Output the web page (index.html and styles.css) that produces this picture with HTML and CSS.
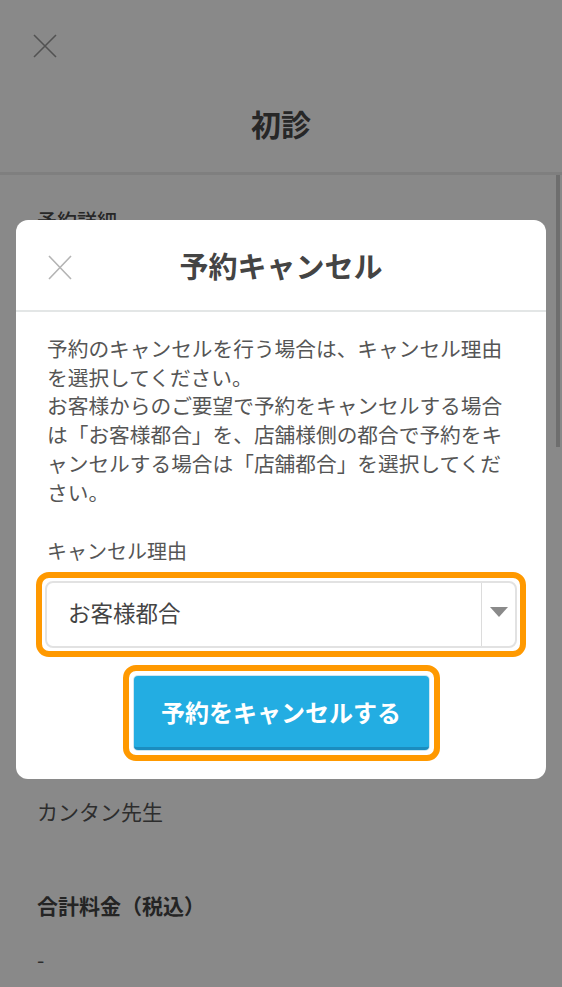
FILE: index.html
```html
<!DOCTYPE html>
<html lang="ja">
<head>
<meta charset="utf-8">
<title>初診</title>
<link rel="stylesheet" href="styles.css">
</head>
<body>
<div class="page">
  <header class="topbar">
    <button class="topbar-close" aria-label="閉じる">
      <svg width="24" height="24" viewBox="0 0 24 24"><path d="M1 1L23 23M23 1L1 23" stroke="#999" stroke-width="1.6" fill="none"/></svg>
    </button>
    <h1 class="topbar-title">初診</h1>
  </header>
  <main class="content">
    <h2 class="section-title">予約詳細</h2>
    <div class="rows"></div>
    <p class="value">カンタン先生</p>
    <h3 class="field-label">合計料金（税込）</h3>
    <p class="value value-dash">-</p>
  </main>
  <div class="scroll-thumb"></div>
</div>

<div class="overlay">
  <div class="modal">
    <div class="modal-head">
      <button class="modal-close" aria-label="閉じる">
        <svg width="24" height="25" viewBox="0 0 24 25"><path d="M1 1L23 24M23 1L1 24" stroke="#b4b4b4" stroke-width="1.6" fill="none"/></svg>
      </button>
      <h2 class="modal-title">予約キャンセル</h2>
      <span></span>
    </div>
    <div class="modal-body">
      <p class="desc">予約のキャンセルを行う場合は、キャンセル理由を選択してください。<br>お客様からのご要望で予約をキャンセルする場合は「お客様都合」を、店舗様側の都合で予約をキャンセルする場合は「店舗都合」を選択してください。</p>
      <label class="reason-label">キャンセル理由</label>
      <div class="ring ring-select">
        <div class="select">
          <span class="select-text">お客様都合</span>
          <span class="select-arrow">
            <svg width="18" height="10" viewBox="0 0 18 10"><polygon points="0,0 18,0 9,10" fill="#8a8a8a"/></svg>
          </span>
        </div>
      </div>
      <div class="btn-wrap">
        <div class="ring ring-btn">
          <button class="btn-cancel">予約をキャンセルする</button>
        </div>
      </div>
    </div>
  </div>
</div>
</body>
</html>
```

FILE: styles.css
```css
* { box-sizing: border-box; }
html, body { margin: 0; padding: 0; }
body {
  width: 562px;
  height: 987px;
  overflow: hidden;
  background: #fff;
  font-family: "Noto Sans CJK JP", "Noto Sans", sans-serif;
  color: #555;
}
button { font-family: inherit; border: 0; background: none; padding: 0; margin: 0; }
h1, h2, h3, p { margin: 0; }

.page { position: relative; height: 987px; background: #fff; }

.topbar {
  height: 175px;
  border-bottom: 3px solid #ececec;
  display: flex;
  flex-direction: column;
  padding: 34px 0 0 33px;
}
.topbar-close { width: 24px; height: 24px; display: block; }
.topbar-close svg { display: block; }
.topbar-title {
  margin: 45px 0 0 -33px;
  text-align: center;
  font-size: 30px;
  line-height: 40px;
  font-weight: 700;
  color: #4a4a4a;
}

.content { padding: 32px 37px 0; }
.section-title {
  font-size: 20px;
  line-height: 28px;
  font-weight: 500;
  color: #4a4a4a;
}
.rows { height: 561px; }
.value {
  font-size: 21px;
  line-height: 30px;
  color: #555;
}
.field-label {
  margin-top: 64px;
  font-size: 21px;
  line-height: 30px;
  font-weight: 700;
  color: #444;
}
.value-dash { margin-top: 24px; }

.scroll-thumb {
  position: absolute;
  left: 556px;
  top: 175px;
  width: 4px;
  height: 272px;
  background: #cdcdcd;
}

.overlay {
  position: fixed;
  inset: 0;
  background: rgba(0, 0, 0, 0.463);
  display: flex;
  flex-direction: column;
  align-items: center;
  padding-top: 220px;
}
.modal {
  width: 530px;
  background: #fff;
  border-radius: 12px;
  overflow: hidden;
}
.modal-head {
  height: 92px;
  border-bottom: 2px solid #e3e6e6;
  display: grid;
  grid-template-columns: 1fr auto 1fr;
  align-items: center;
}
.modal-close { justify-self: start; margin-left: 32px; margin-top: 4px; width: 24px; height: 25px; }
.modal-close svg { display: block; }
.modal-title {
  font-size: 29px;
  line-height: 40px;
  font-weight: 700;
  color: #444;
}

.modal-body { padding: 22px 31px 18px; }
.desc {
  font-size: 20.7px;
  line-height: 28.7px;
  color: #555;
  line-break: loose;
}
.reason-label {
  display: block;
  margin-top: 31px;
  font-size: 20px;
  line-height: 28.7px;
  color: #555;
}

.ring {
  border: 6px solid #ff9900;
  border-radius: 13px;
  background: #fff;
}
.ring-select { margin: 6px -11px 0; padding: 3px; }
.select {
  height: 67px;
  border: 2px solid #e2e2e2;
  border-radius: 8px;
  display: flex;
  align-items: stretch;
}
.select-text {
  flex: 1;
  display: flex;
  align-items: center;
  padding: 0 0 4px 21px;
  font-size: 22.5px;
  color: #444;
}
.select-arrow {
  width: 34px;
  border-left: 1px solid #dcdcdc;
  display: flex;
  align-items: center;
  justify-content: center;
  padding-bottom: 4px;
}
.select-arrow svg { display: block; }

.btn-wrap { margin-top: 8px; display: flex; justify-content: center; }
.ring-btn { padding: 5px; }
.btn-cancel {
  display: block;
  width: 295px;
  height: 74px;
  background: #23ade2;
  border-radius: 4px;
  border-bottom: 3px solid #1b8dbf;
  box-shadow: 0 0 0 1px #cfe7f2;
  color: #fff;
  font-size: 24px;
  font-weight: 700;
  letter-spacing: 0;
}
```
